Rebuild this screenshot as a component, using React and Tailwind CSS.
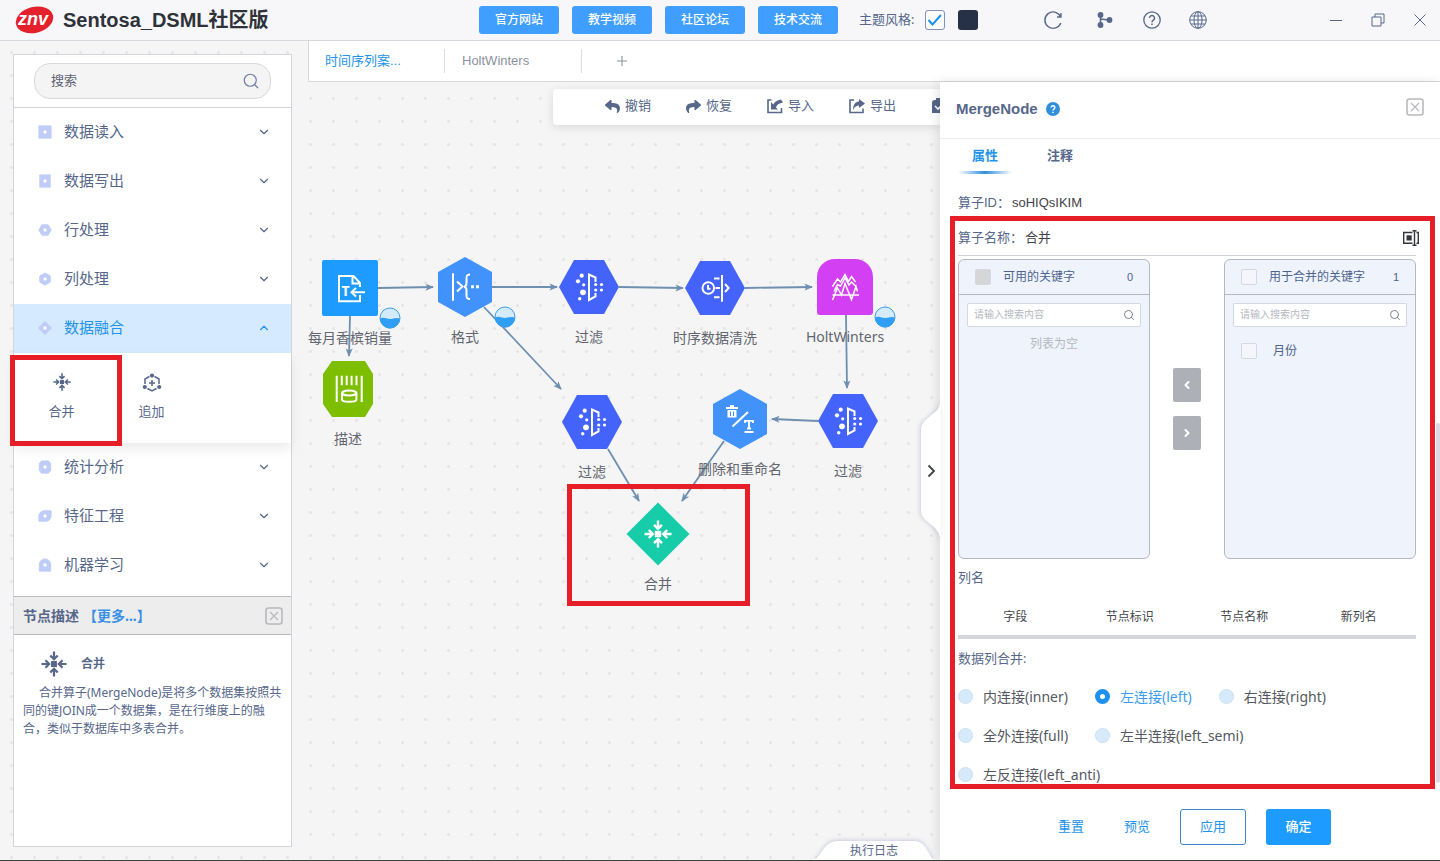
import React, { useState } from "react";
import { ChevronDown, ChevronUp, ChevronLeft, ChevronRight, Search, Plus } from "lucide-react";
import { FaReply, FaShare } from "react-icons/fa";

const NAV_BUTTONS = ["官方网站", "教学视频", "社区论坛", "技术交流"];

const CATEGORIES = [
  { name: "数据读入", shape: "M1 1h14v14H1z" },
  { name: "数据写出", shape: "M2 1h12v14H2z" },
  { name: "行处理", shape: "M4.5 2h7L15 8l-3.500 6h-7L1 8z" },
  { name: "列处理", shape: "M8 1l6 3.500v7L8 15l-6-3.500v-7z" },
  { name: "数据融合", shape: "M8 .5L15.500 8 8 15.500.5 8z" },
  { name: "统计分析", shape: "M4 1h8l2.500 3v8L12 15H4l-2.500-3V4z" },
  { name: "特征工程", shape: "M7 2h8v6a6 6 0 0 1-6 6H1V8a6 6 0 0 1 6-6z" },
  { name: "机器学习", shape: "M8 1a6.500 6.500 0 0 1 6.500 6.500V15h-13V7.500A6.500 6.500 0 0 1 8 1z" },
];

const NODES = [
  { id: "source", x: 42, y: 206, label: "每月香槟销量", shape: "square", icon: "text", badge: true },
  { id: "format", x: 157, y: 205, label: "格式", shape: "hexTall", icon: "format", badge: true },
  { id: "filter1", x: 281, y: 205, label: "过滤", shape: "hex", icon: "filter" },
  { id: "clean", x: 407, y: 206, label: "时序数据清洗", shape: "hex", icon: "clean" },
  { id: "holt", x: 537, y: 205, label: "HoltWinters", shape: "arch", icon: "holt", badge: true },
  { id: "describe", x: 40, y: 307, label: "描述", shape: "octagon", icon: "describe" },
  { id: "filter2", x: 284, y: 340, label: "过滤", shape: "hex", icon: "filter" },
  { id: "rename", x: 432, y: 337, label: "删除和重命名", shape: "hexTall", icon: "rename" },
  { id: "filter3", x: 540, y: 339, label: "过滤", shape: "hex", icon: "filter" },
  { id: "merge", x: 350, y: 452, label: "合并", shape: "diamond", icon: "merge" },
];

const EDGES = [
  [70, 206, 125, 205],
  [184, 205, 249, 205],
  [311, 205, 375, 206],
  [437, 206, 504, 205],
  [42, 234, 41, 274],
  [176, 225, 253, 307],
  [300, 367, 331, 419],
  [538, 233, 539, 306],
  [510, 339, 464, 337],
  [416, 359, 374, 419],
];

const JOINS = [
  { value: "inner", label: "内连接(inner)" },
  { value: "left", label: "左连接(left)" },
  { value: "right", label: "右连接(right)" },
  { value: "full", label: "全外连接(full)" },
  { value: "left_semi", label: "左半连接(left_semi)" },
  { value: "left_anti", label: "左反连接(left_anti)" },
];

const MergeGlyph = ({ className, ...rest }) => (
  <svg viewBox="0 0 28 28" fill="none" stroke="currentColor" strokeWidth="2.4" className={className} {...rest}>
    <rect x="10.8" y="10.8" width="6.4" height="6.4" rx="0.6" fill="currentColor" stroke="none" />
    {[0, 90, 180, 270].map((deg) => (
      <path key={deg} d="M.5 14H8M4.800 10L8.800 14l-4 4" transform={`rotate(${deg} 14 14)`} />
    ))}
  </svg>
);

const AppendGlyph = () => (
  <svg viewBox="0 0 20 20" fill="none" stroke="currentColor" strokeWidth="1.5" className="size-5">
    <path d="M7.500 3.500L3 6v5M12.500 3.500L17 6v5M5.500 15.500L10 18l4.500-2.500M10 7v6M7 10h6" />
    <g fill="currentColor" stroke="none">
      <circle cx="10" cy="2.600" r="2.100" />
      <circle cx="2.800" cy="14" r="2.100" />
      <circle cx="17.200" cy="14" r="2.100" />
    </g>
  </svg>
);

const SHAPES = {
  square: <rect x="4" y="4" width="56" height="56" rx="2" fill="#1e9bff" />,
  hexTall: <path d="M32 2l27 15v30L32 62 5 47V17z" fill="#4193fb" />,
  hex: <path d="M17 5h30l15 27-15 27H17L2 32z" fill="#4463fb" />,
  arch: <path d="M22 4h20a18 18 0 0 1 18 18v35a3 3 0 0 1-3 3H7a3 3 0 0 1-3-3V22A18 18 0 0 1 22 4z" fill="#d33ff3" />,
  octagon: <path d="M16 4h33l8 13v30l-8 13H16L7 47V17z" fill="#7dbf00" />,
  diamond: <path d="M32 .5L63.500 32 32 63.500.5 32z" fill="#16cca9" />,
};

const ICONS = {
  text: (
    <>
      <path d="M42 39v6.300H21V20h14.500l6.500 7v4M34.500 20v7.500H42M47 36.300H34M38 32l-4.500 4.300L38 40.500" />
      <text x="23.500" y="39.500" fontSize="14" fontWeight="700" fill="#fff" stroke="none">T</text>
    </>
  ),
  format: (
    <>
      <path d="M20 18.300v27.400M24 26.500l5.500 5L24 36.500M37 19.500c-3 0-3.500 1-3.500 3.500v5c0 2.500-.5 3.500-2.500 3.700 2 .2 2.500 1.300 2.500 3.800v5c0 2.500.5 3.500 3.500 3.500" />
      <path d="M38 30.300h3v3h-3zM43 30.300h3v3h-3z" fill="#fff" stroke="none" />
    </>
  ),
  filter: (
    <>
      <path d="M38.500 27v-4.500L32 19.500v25.500l6.500-3.500V38" />
      <g fill="#fff" stroke="none">
        <circle cx="24.700" cy="20.700" r="2.100" />
        <circle cx="21" cy="26.300" r="2.100" />
        <circle cx="26.700" cy="29.800" r="1.600" />
        <circle cx="26" cy="37.300" r="2.900" />
        <circle cx="22.700" cy="43.700" r="1.700" />
        <circle cx="38.700" cy="29.500" r="1.600" />
        <circle cx="38.700" cy="35" r="1.600" />
        <circle cx="44.500" cy="29.500" r="1.600" />
        <circle cx="44.500" cy="35" r="1.600" />
      </g>
    </>
  ),
  clean: (
    <>
      <circle cx="25.300" cy="32" r="5.800" />
      <path d="M25 29v3.800h2.500M39 19v26.700M31 22.500h5.500M31 41.300h5.500M32.500 32H37M42 28l3.600 4-3.600 4" />
    </>
  ),
  holt: (
    <path
      strokeWidth="1.500"
      d="M19.500 31.500l5-7.500 3 3L32 19.500l3.500 7 3-5 4 5.500M21 36.500l3.500-7 3 1.500L32 23l4 7 2.500-3 4.500 4.500M19.500 45l5-12 4 7L32 28.500l6.500 16 4.500-13 1.500 5M19.500 40H46"
    />
  ),
  describe: (
    <>
      <path d="M20.700 18.700V45M45.700 18.700V45M25.800 18.700v9.600M30.700 18.700v9.600M35.600 18.700v9.600M40.500 18.700v9.600" />
      <ellipse cx="33.200" cy="36" rx="7.200" ry="2.500" />
      <path d="M26 36v6.500c0 3 14.400 3 14.400 0V36" />
    </>
  ),
  rename: (
    <>
      <path d="M24.500 39.500L40 25" />
      <path d="M18 20h4v-2h4v2h4v2H18zM19.500 23h9v7.500h-9z" fill="#fff" stroke="none" />
      <path d="M22.500 24.500v4.500M25.500 24.500v4.500" stroke="#4193fb" strokeWidth="1" />
      <path d="M37 36v-2.200h8V36M41 34v7.500M39 41.500h4M36.500 45h9" strokeWidth="1.800" />
    </>
  ),
  merge: <MergeGlyph x="18" y="18" width="28" height="28" stroke="#fff" color="#fff" />,
};

const FlowNode = ({ node }) => (
  <div
    className="absolute flex w-16 -translate-x-1/2 flex-col items-center gap-2"
    style={{ left: node.x, top: node.y - 32 }}
  >
    <svg viewBox="0 0 64 64" className="size-16">
      {SHAPES[node.shape]}
      <g fill="none" stroke="#fff" strokeWidth="2">{ICONS[node.icon]}</g>
    </svg>
    <span className="text-sm leading-5 whitespace-nowrap text-[#62656f]">{node.label}</span>
    {node.badge && (
      <svg viewBox="0 0 22 22" className="absolute top-[51px] left-[61px] size-[22px]">
        <circle cx="11" cy="11" r="10" fill="#d3ebfa" />
        <path d="M1 11.500c4-2 7 .5 10 .5s6-2 10-.5a10 10 0 0 1-20 0z" fill="#2f9ff5" />
        <circle cx="11" cy="11" r="10" fill="none" stroke="#3c9fe6" />
      </svg>
    )}
  </div>
);

const BoxClose = ({ label }) => (
  <button aria-label={label} className="text-[#b9b9bd]">
    <svg viewBox="0 0 18 18" fill="none" stroke="currentColor" className="size-[18px]">
      <rect x="1" y="1" width="16" height="16" rx="2.500" strokeWidth="1.600" />
      <path d="M5 5l8 8M13 5l-8 8" strokeWidth="1.200" />
    </svg>
  </button>
);

const TitleBar = () => (
  <header className="flex h-[41px] shrink-0 items-center border-b border-[#d6d8de] bg-[#f7f7fa] text-[#56678a]">
    <div className="flex w-[479px] items-center gap-[9px] pl-[14px]">
      <svg viewBox="0 0 40 30" className="h-[30px] w-10">
        <ellipse cx="20.500" cy="15" rx="19" ry="13" transform="rotate(-14 20 15)" fill="#e3202b" />
        <text x="4" y="19.500" fontFamily="Liberation Sans" fontStyle="italic" fontWeight="700" fontSize="18" fill="#fff">
          znv
        </text>
      </svg>
      <h1 className="font-['Liberation_Sans','Noto_Sans_CJK_SC',sans-serif] text-xl font-bold text-[#2f3239]">
        Sentosa_DSML社区版
      </h1>
    </div>
    <nav className="flex gap-[13px]">
      {NAV_BUTTONS.map((name) => (
        <button key={name} className="h-7 w-20 rounded-[3px] bg-[#409eff] text-xs font-medium text-white">
          {name}
        </button>
      ))}
    </nav>
    <div className="ml-[21px] flex items-center gap-[13px]">
      <label htmlFor="theme" className="w-[53px] text-[13px] whitespace-nowrap">主题风格:</label>
      <span className="relative flex size-5">
        <input
          id="theme"
          type="checkbox"
          defaultChecked
          className="size-5 appearance-none rounded-[3px] border border-[#7f93b3] bg-white"
        />
        <svg viewBox="0 0 20 20" fill="none" stroke="#1e90f0" strokeWidth="2" className="pointer-events-none absolute inset-0">
          <path d="M3.500 10l4 4.500L16 5" />
        </svg>
      </span>
      <button aria-label="深色主题" className="size-5 rounded-[3px] bg-[#263148]" />
    </div>
    <div className="ml-auto flex items-center gap-7">
      <button aria-label="刷新" className="mr-1">
        <svg viewBox="0 0 20 20" fill="none" stroke="currentColor" strokeWidth="1.400" className="size-5">
          <path d="M17.500 6.500A8.200 8.200 0 1 0 17.800 13M18 3v4h-4" />
        </svg>
      </button>
      <button aria-label="流程">
        <svg viewBox="0 0 20 20" fill="currentColor" className="size-5">
          <circle cx="5.500" cy="5" r="2.900" />
          <circle cx="5.500" cy="15" r="2.900" />
          <circle cx="14.500" cy="10" r="2.900" />
          <path d="M5.500 5v10M5.500 9l8 1" stroke="currentColor" strokeWidth="1.600" fill="none" />
        </svg>
      </button>
      <button aria-label="帮助">
        <svg viewBox="0 0 18 18" fill="none" stroke="currentColor" strokeWidth="1.300" className="size-[18px]">
          <circle cx="9" cy="9" r="8.200" />
          <path d="M6.500 7a2.500 2.500 0 1 1 3.800 2.200C9.300 9.800 9 10.200 9 11.200M9 12.500v1.400" strokeWidth="1.500" />
        </svg>
      </button>
      <button aria-label="语言">
        <svg viewBox="0 0 18 18" fill="none" stroke="currentColor" className="size-[18px]">
          <circle cx="9" cy="9" r="8.300" />
          <ellipse cx="9" cy="9" rx="4" ry="8.300" />
          <path d="M9 .7v16.600M.7 9h16.600M2 5h14M2 13h14" />
        </svg>
      </button>
    </div>
    <div className="ml-[122px] flex items-center gap-7 pr-[13px]">
      <button aria-label="最小化">
        <svg viewBox="0 0 14 14" stroke="currentColor" className="size-[14px]"><path d="M1 7.500h12" /></svg>
      </button>
      <button aria-label="还原">
        <svg viewBox="0 0 14 14" fill="none" stroke="currentColor" className="size-[14px]">
          <path d="M1 4h9v9H1zM4 4V1h9v9h-3" />
        </svg>
      </button>
      <button aria-label="关闭">
        <svg viewBox="0 0 14 14" stroke="currentColor" className="size-[14px]"><path d="M1.500 1.500l11 11M12.500 1.500l-11 11" /></svg>
      </button>
    </div>
  </header>
);

const Sidebar = ({ open, setOpen }) => (
  <aside className="relative my-[13px] ml-[13px] flex w-[279px] shrink-0 flex-col border border-[#d3d5da] bg-white text-[#56678a]">
    <div className="flex h-[53px] shrink-0 items-center border-b border-[#d3d5da] px-5">
      <label className="flex h-9 flex-1 items-center rounded-2xl border border-[#d8d9de] bg-[#f4f4f5] pr-[10px] pl-4">
        <input
          aria-label="搜索"
          placeholder="搜索"
          className="min-w-0 flex-1 bg-transparent text-[13px] outline-none placeholder:text-[#5f6371]"
        />
        <Search className="size-[18px] text-[#6f7fa3]" strokeWidth={1.6} />
      </label>
    </div>
    <ul className="shrink-0 pb-[6px]">
      {CATEGORIES.map((cat) => {
        const active = cat.name === open;
        const Chevron = active ? ChevronUp : ChevronDown;
        return (
          <li key={cat.name}>
            <button
              onClick={() => setOpen(active ? null : cat.name)}
              className={`flex h-[49px] w-full items-center pr-5 pb-[2px] pl-6 ${active ? "bg-[#d5eaff] text-[#2493ea]" : ""}`}
            >
              <svg viewBox="0 0 16 16" className="size-[14px]">
                <path d={cat.shape} fill="#bfccf8" stroke="#bfccf8" strokeLinejoin="round" />
                <circle cx="8" cy="8" r="1.900" fill="#fff" />
              </svg>
              <span className="ml-3 flex-1 text-left text-[15px]">{cat.name}</span>
              <Chevron className="size-[14px]" strokeWidth={2} />
            </button>
            {active && (
              <div className="flex h-[90px] shadow-[0_6px_12px_rgba(0,0,0,0.08)]">
                <button className="flex w-[95px] flex-col items-center gap-[10px] pt-5 text-[13px] leading-5">
                  <MergeGlyph className="size-[18px]" />
                  合并
                </button>
                <button className="flex w-[85px] flex-col items-center gap-2 pt-5 text-[13px] leading-5">
                  <AppendGlyph />
                  追加
                </button>
              </div>
            )}
          </li>
        );
      })}
    </ul>
    <section className="flex-1 border-t border-[#b9bbc0]">
      <div className="flex h-[38px] items-center gap-1 border-b border-[#b9bbc0] bg-[#ededed] pr-2 pl-[9px] text-sm font-bold">
        <h2>节点描述</h2>
        <a href="#more" className="mr-auto text-[#3a8fe6]">【更多...】</a>
        <BoxClose label="关闭描述" />
      </div>
      <div className="flex items-center gap-[14px] pt-4 pl-[27px] text-xs font-bold">
        <MergeGlyph className="size-[26px]" />
        合并
      </div>
      <p className="px-[9px] pt-[7px] indent-4 text-xs leading-[18px]">
        合并算子(MergeNode)是将多个数据集按照共同的键JOIN成一个数据集，是在行维度上的融合，类似于数据库中多表合并。
      </p>
    </section>
    {/* highlight around the selected operator */}
    <div className="pointer-events-none absolute top-[300px] -left-1 h-[91px] w-28 border-[5px] border-[#e61e28]" />
  </aside>
);

const TabBar = () => (
  <div className="flex h-[41px] shrink-0 items-center border-b border-l border-[#d6d8de] bg-white font-['Liberation_Sans','Noto_Sans_CJK_SC',sans-serif] text-[13px] text-[#8b919e]">
    <button className="h-6 w-[136px] border-r border-[#dcdee3] pl-4 text-left text-[#2493ea]">时间序列案...</button>
    <button className="h-6 w-[137px] border-r border-[#dcdee3] pl-[17px] text-left">HoltWinters</button>
    <button aria-label="新建" className="px-8">
      <Plus className="size-4" strokeWidth={1.6} />
    </button>
  </div>
);

const ImportGlyph = () => (
  <svg viewBox="0 0 16 16" fill="none" stroke="currentColor" strokeWidth="1.600" className="size-4">
    <path d="M4.500 2H1v12.500h13.500V10" />
    <path d="M4 4v7.500h7L9 9.500C9.500 7 12 5 16 4.500L14 1.500C10 2 7.500 4 6.300 6.500z" fill="currentColor" stroke="none" />
  </svg>
);

const ExportGlyph = () => (
  <svg viewBox="0 0 16 16" fill="none" stroke="currentColor" strokeWidth="1.600" className="size-4">
    <path d="M5 2H1v12.500h13V10.500" />
    <path d="M10 1l6 4.500-6 4.500V7.500C7 7.500 5.500 9 4 12c0-5 2-8 6-8.500z" fill="currentColor" stroke="none" />
  </svg>
);

const SaveGlyph = () => (
  <svg viewBox="0 0 16 16" fill="currentColor" className="size-4">
    <path d="M4 2h1V0h6v2h1a3 3 0 0 1 3 3v10H1V5a3 3 0 0 1 3-3z" />
    <path d="M4 8l3 3 5-5" fill="none" stroke="#fff" strokeWidth="1.600" />
  </svg>
);

const TOOLS = [
  { name: "撤销", icon: <FaReply className="size-[15px]" /> },
  { name: "恢复", icon: <FaShare className="size-[15px]" /> },
  { name: "导入", icon: <ImportGlyph /> },
  { name: "导出", icon: <ExportGlyph /> },
];

const Canvas = () => (
  <main className="relative min-w-0 flex-1">
    <svg className="absolute inset-0 size-full" fill="none" stroke="#6f8fb0" strokeWidth="1.800">
      <defs>
        <marker id="arrow" markerUnits="userSpaceOnUse" markerWidth="10" markerHeight="10" refX="8" refY="4" orient="auto">
          <path d="M.5.5L9 4 .5 7.500 2.500 4z" fill="#6f8fb0" stroke="none" />
        </marker>
      </defs>
      {EDGES.map(([x1, y1, x2, y2]) => (
        <line key={`${x1}-${y1}`} x1={x1} y1={y1} x2={x2} y2={y2} markerEnd="url(#arrow)" />
      ))}
    </svg>
    {NODES.map((node) => (
      <FlowNode key={node.id} node={node} />
    ))}
    {/* highlight around the merge node */}
    <div className="pointer-events-none absolute top-[402px] left-[259px] h-[122px] w-[183px] border-[5px] border-[#e61e28]" />

    <div className="absolute top-[7px] right-0 left-[245px] flex h-9 items-center gap-[35px] overflow-hidden rounded-l bg-white pb-[2px] pl-[52px] text-[13px] text-[#56678a] shadow-[0_2px_10px_rgba(0,0,0,0.12)]">
      {TOOLS.map((tool) => (
        <button key={tool.name} className="flex shrink-0 items-center gap-[5px]">
          {tool.icon}
          {tool.name}
        </button>
      ))}
      <button aria-label="保存" className="shrink-0">
        <SaveGlyph />
      </button>
    </div>

    <button aria-label="收起面板" className="absolute top-[316px] right-0 z-10 h-[146px] w-[22px]">
      <svg viewBox="0 0 22 146" className="size-full overflow-visible">
        <path
          d="M23 0C22 12 18 13 10 20 5 24 3 27 3 32v80c0 5 2 8 7 12 8 7 12 9 13 22z"
          fill="#fff"
          className="drop-shadow-[-1px_0_2px_rgba(100,110,170,0.3)]"
        />
        <path d="M10.500 67.500l5.500 5.500-5.500 5.500" fill="none" stroke="#3d4047" strokeWidth="1.800" />
      </svg>
    </button>

    <button className="absolute right-[2px] bottom-0 flex h-[19px] w-[128px] items-center justify-center text-xs text-[#56678a]">
      <svg viewBox="0 0 128 19" className="absolute inset-0 overflow-visible">
        <path
          d="M2 19c10-1 10-19 26-19h76c14 0 14 18 22 19z"
          fill="#fff"
          className="drop-shadow-[0_-1px_2px_rgba(100,110,170,0.3)]"
        />
      </svg>
      <span className="relative">执行日志</span>
    </button>
  </main>
);

const CHECKBOX = "size-4 appearance-none rounded-[2px] border border-[#d5d8e0]";

const KeyList = ({ id, title, count, disabled, children }) => (
  <div className="flex h-[300px] w-48 flex-col rounded-md border border-[#b4b8c0] bg-[#eff3fb] text-xs text-[#4c6390]">
    <div className="flex h-[35px] items-center border-b border-[#b4b8c0] px-4">
      <input
        id={id}
        type="checkbox"
        disabled={disabled}
        className={`${CHECKBOX} ${disabled ? "bg-[#d6d6d8]" : "bg-[#f4f6fb]"}`}
      />
      <label htmlFor={id} className="ml-3 flex-1 whitespace-nowrap">{title}</label>
      <span className="font-['Liberation_Sans',sans-serif] text-[11px]">{count}</span>
    </div>
    <label className="mx-2 mt-2 flex h-6 items-center rounded-[2px] border border-[#d5d8e0] bg-white pr-[5px] pl-[6px]">
      <input
        aria-label={`${title}搜索`}
        placeholder="请输入搜索内容"
        className="min-w-0 flex-1 text-[10px] outline-none placeholder:text-[#b5b8bf]"
      />
      <Search className="size-3 text-[#7d828c]" strokeWidth={2} />
    </label>
    {children}
  </div>
);

const PropertyPanel = () => {
  const [join, setJoin] = useState("left");

  return (
    <section className="relative flex w-[500px] shrink-0 flex-col bg-white text-[13px] text-[#56678a] shadow-[-3px_0_10px_rgba(0,0,0,0.1)]">
      <div className="flex h-[57px] shrink-0 items-center border-b border-[#ececef] px-4 pb-[2px]">
        <h2 className="font-['Liberation_Sans',sans-serif] text-[15px] font-bold">MergeNode</h2>
        <button aria-label="节点帮助" className="mr-auto ml-2">
          <svg viewBox="0 0 14 14" fill="none" stroke="#fff" className="size-[14px]">
            <circle cx="7" cy="7" r="7" fill="#2f8fdb" stroke="none" />
            <path d="M5.200 5.500a1.800 1.800 0 1 1 2.700 1.600C7.200 7.500 7 7.800 7 8.500M7 9.700v1.400" strokeWidth="1.500" />
          </svg>
        </button>
        <div className="flex pb-1">
          <BoxClose label="关闭面板" />
        </div>
      </div>

      <div className="flex h-9 shrink-0 gap-[21px] pl-[18px] font-bold">
        <button className="flex w-[54px] flex-col items-center text-[#2493ea]">
          <span className="leading-8">属性</span>
          <span className="h-[3px] w-full bg-linear-to-r from-transparent via-[#2f8fdb] to-transparent" />
        </button>
        <button className="w-[54px] self-start leading-8">注释</button>
      </div>

      <div className="min-h-0 flex-1 overflow-hidden pr-6 pl-[18px]">
        <dl className="pt-[10px] font-['Liberation_Sans','Noto_Sans_CJK_SC',sans-serif]">
          <div className="flex h-9 items-center">
            <dt className="w-[54px] whitespace-nowrap">算子ID：</dt>
            <dd className="text-[#3f4249]">soHIQsIKIM</dd>
          </div>
          <div className="flex h-[35px] items-center border-b border-[#d0d2d8]">
            <dt className="w-[67px] whitespace-nowrap">算子名称：</dt>
            <dd className="flex-1 text-[#3f4249]">合并</dd>
            <button aria-label="重命名" className="text-[#34373d]">
              <svg viewBox="0 0 18 16" fill="none" stroke="currentColor" strokeWidth="1.400" className="-mr-1 h-4 w-[18px]">
                <path d="M10.500 2.500H1.700v10.800h8.800M14.500 2.500h1.800v10.800h-1.800M10.500.8h4M10.500 15.200h4M12.500.8v14.400" />
                <rect x="4.500" y="5.300" width="5.200" height="5.200" fill="currentColor" stroke="none" />
              </svg>
            </button>
          </div>
        </dl>

        <div className="mt-[3px] flex items-center justify-between">
          <KeyList id="available" title="可用的关键字" count={0} disabled>
            <p className="mt-[7px] text-center leading-5 text-[#b5b8bf]">列表为空</p>
          </KeyList>
          <div className="flex flex-col gap-[14px] text-white">
            <button aria-label="移到左侧" className="flex h-[34px] w-7 items-center justify-center rounded-[2px] bg-[#aeb0b8]">
              <ChevronLeft className="size-3" strokeWidth={4} />
            </button>
            <button aria-label="移到右侧" className="flex h-[34px] w-7 items-center justify-center rounded-[2px] bg-[#aeb0b8]">
              <ChevronRight className="size-3" strokeWidth={4} />
            </button>
          </div>
          <KeyList id="merged" title="用于合并的关键字" count={1}>
            <label className="mt-3 flex h-6 items-center gap-4 pl-4">
              <input type="checkbox" className={`${CHECKBOX} bg-[#f4f6fb]`} />
              月份
            </label>
          </KeyList>
        </div>

        <h3 className="leading-9">列名</h3>
        <table className="w-full table-fixed border-b-4 border-[#d5d6db] text-xs text-[#45484f]">
          <thead>
            <tr className="h-[42px]">
              <th className="pt-1 font-normal">字段</th>
              <th className="pt-1 font-normal">节点标识</th>
              <th className="pt-1 font-normal">节点名称</th>
              <th className="pt-1 font-normal">新列名</th>
            </tr>
          </thead>
        </table>

        <fieldset>
          <legend className="leading-[38px]">数据列合并:</legend>
          <div className="flex flex-wrap gap-x-[27px] pr-4 text-sm text-[#55585f]">
            {JOINS.map((item) => (
              <label
                key={item.value}
                className={`flex h-[39px] items-center gap-[10px] ${join === item.value ? "text-[#3a9df0]" : ""}`}
              >
                <input
                  type="radio"
                  name="join"
                  checked={join === item.value}
                  onChange={() => setJoin(item.value)}
                  className="size-[15px] appearance-none rounded-full border border-[#c9e0f2] bg-[#d6eafa] checked:border-[5px] checked:border-[#1e90f0] checked:bg-white"
                />
                {item.label}
              </label>
            ))}
          </div>
        </fieldset>
      </div>

      <div className="flex h-[66px] shrink-0 items-center justify-end pr-[109px] text-[#2493ea]">
        <button className="px-5">重置</button>
        <button className="px-5">预览</button>
        <button className="ml-[10px] h-9 w-[66px] rounded-[3px] border border-[#3a86c8]">应用</button>
        <button className="ml-5 h-9 w-[65px] rounded-[3px] bg-[#1e9bff] font-medium text-white">确定</button>
      </div>

      {/* scroll thumb */}
      <div className="absolute top-[341px] right-0 h-[360px] w-1 rounded-full bg-[#dadbe4]" />
      {/* highlight around the merge settings */}
      <div className="pointer-events-none absolute top-[134px] right-[5px] left-[10px] h-[573px] border-[5px] border-[#e61e28]" />
    </section>
  );
};

const App = () => {
  const [open, setOpen] = useState("数据融合");

  return (
    <div className="flex h-screen flex-col overflow-hidden border-b border-[#3a3f3a] bg-[#f5f5f5] bg-[radial-gradient(circle,#e6e6e8_1px,transparent_2px)] bg-size-[23px_23px] bg-position-[0px_18px] font-['Noto_Sans','Noto_Sans_CJK_SC',sans-serif]">
      <TitleBar />
      <div className="flex min-h-0 flex-1">
        <Sidebar open={open} setOpen={setOpen} />
        <div className="ml-4 flex min-w-0 flex-1 flex-col">
          <TabBar />
          <div className="flex min-h-0 flex-1">
            <Canvas />
            <PropertyPanel />
          </div>
        </div>
      </div>
    </div>
  );
};

export default App;
